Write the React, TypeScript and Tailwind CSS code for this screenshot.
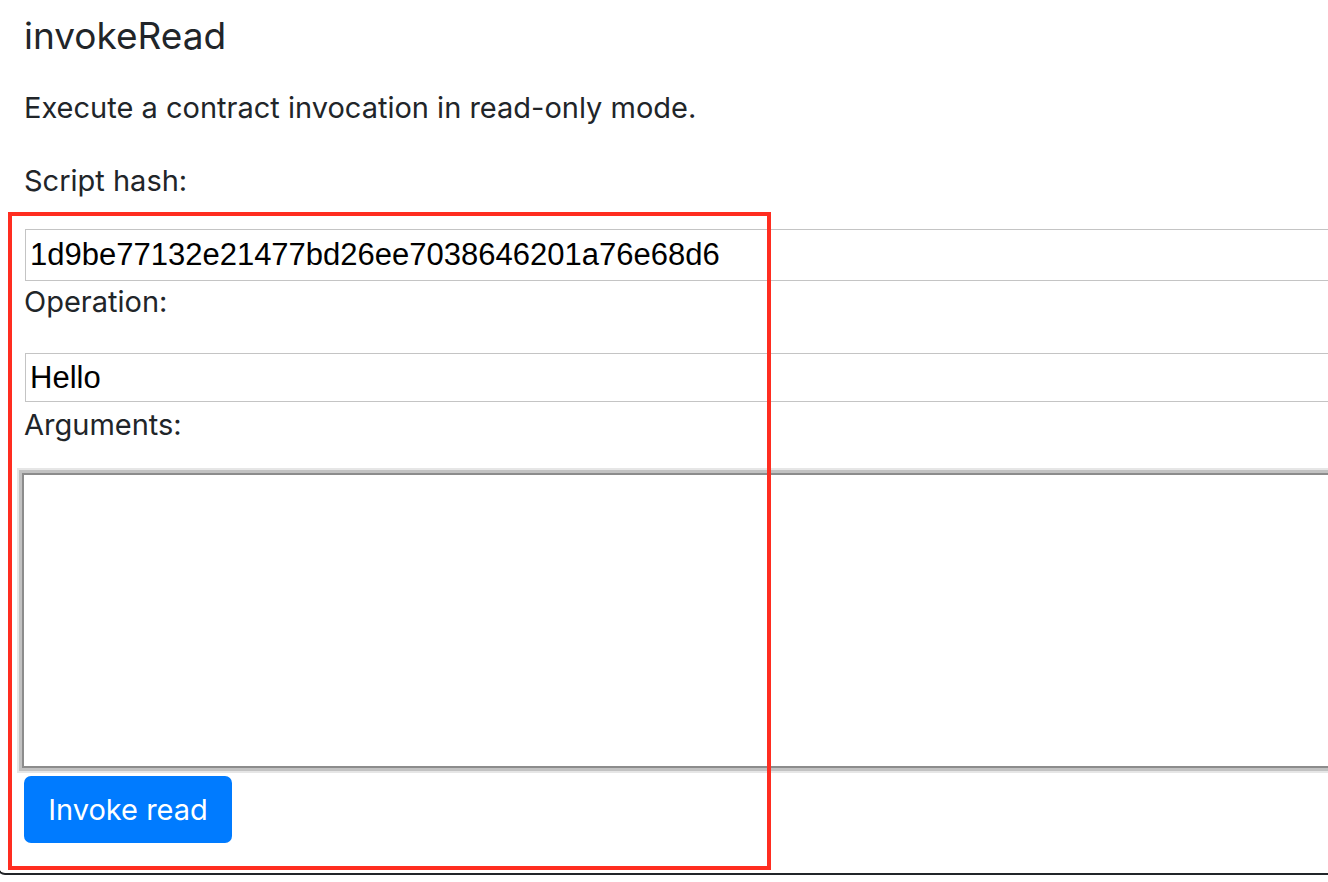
import React, { useState } from "react";

const App = () => {
  const [scriptHash, setScriptHash] = useState<string>(
    "1d9be77132e21477bd26ee7038646201a76e68d6",
  );
  const [operation, setOperation] = useState<string>("Hello");
  const [args, setArgs] = useState<string>("");

  return (
    <div className="relative h-[882px] w-[1328px] overflow-hidden bg-white text-[#212529] font-['Inter',sans-serif]">
      <div className="-ml-[3px] h-[875px] border-b-2 border-l-2 border-[#212529] rounded-bl-[8px]">
        <div className="pl-[25px] pt-[14px]">
          <h4 className="text-[37px] leading-[44px] font-normal">invokeRead</h4>
          <p className="mt-[30px] text-[29px] leading-[40px]">
            Execute a contract invocation in read-only mode.
          </p>
          <p className="mt-[33px] text-[29px] leading-[40px]">Script hash:</p>
          <input
            className="mt-[28px] ml-[1px] block h-[52px] w-[1400px] border border-[#c4c4c4] px-[4px] text-[31px] text-black outline-none font-['Liberation_Sans',Arial,sans-serif]"
            value={scriptHash}
            onChange={(e: React.ChangeEvent<HTMLInputElement>) =>
              setScriptHash(e.target.value)
            }
          />
          <label className="mt-[1px] block text-[29px] leading-[40px]">
            Operation:
          </label>
          <input
            className="mt-[31px] ml-[1px] block h-[49px] w-[1400px] border border-[#c4c4c4] px-[4px] text-[31px] text-black outline-none font-['Liberation_Sans',Arial,sans-serif]"
            value={operation}
            onChange={(e: React.ChangeEvent<HTMLInputElement>) =>
              setOperation(e.target.value)
            }
          />
          <label className="mt-[3px] block text-[29px] leading-[40px]">
            Arguments:
          </label>
          <textarea
            className="mt-[28px] -ml-[2px] block h-[295px] w-[1400px] resize-none border-2 border-[#8c8c8c] shadow-[0_0_0_3px_#c2c2c2,0_0_0_5px_#e6e6e6] outline-none"
            value={args}
            onChange={(e: React.ChangeEvent<HTMLTextAreaElement>) =>
              setArgs(e.target.value)
            }
          />
          <button className="mt-[8px] h-[67px] w-[208px] rounded-[7px] bg-[#007bff] text-[29px] text-white cursor-pointer">
            Invoke read
          </button>
        </div>
      </div>
      <div className="absolute left-[8px] top-[212px] h-[658px] w-[763px] border-[4px] border-[#ff2d20] pointer-events-none" />
    </div>
  );
};

export default App;
